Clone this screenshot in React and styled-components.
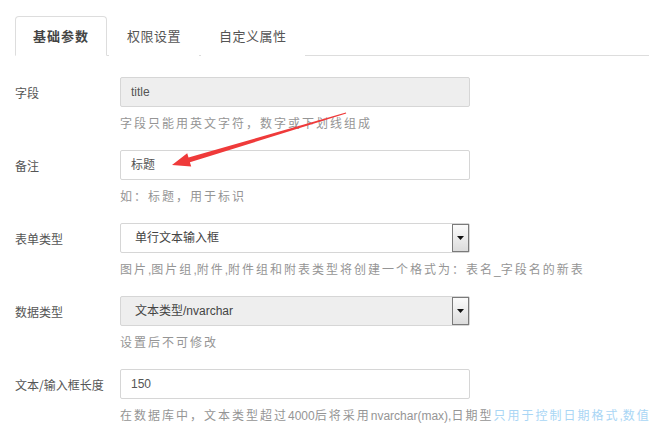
import React from "react";
import styled, { createGlobalStyle } from "styled-components";

const Global = createGlobalStyle`
  html, body { margin: 0; padding: 0; background: #fff; overflow: hidden; }
  body { font-family: "Liberation Sans", "Noto Sans CJK SC", sans-serif; }
`;

const Page = styled.div`
  position: relative;
  width: 649px;
  height: 438px;
  padding: 16px 0 0 15px;
  box-sizing: border-box;
  overflow: hidden;
`;

const TabBar = styled.ul`
  display: flex;
  margin: 0;
  padding: 0;
  list-style: none;
  border-bottom: 1px solid #ddd;
  height: 39px;
`;

const Tab = styled.li`
  padding: 0 17px;
  margin-right: 2px;
  height: 40px;
  line-height: 37px;
  box-sizing: border-box;
  font-family: "Noto Sans CJK SC", sans-serif;
  font-size: 13px;
  color: ${(p) => (p.$active ? "#444" : "#555")};
  font-weight: ${(p) => (p.$active ? 700 : 400)};
  letter-spacing: ${(p) => (p.$active ? "1px" : "0.5px")};
  border: 1px solid ${(p) => (p.$active ? "#ddd" : "transparent")};
  border-bottom-color: ${(p) => (p.$active ? "#fff" : "transparent")};
  border-radius: 4px 4px 0 0;
  background: #fff;
`;

const Form = styled.div`
  display: flex;
  flex-direction: column;
  gap: 17px;
  padding-top: 21px;
`;

const Row = styled.div`
  display: grid;
  grid-template-columns: 105px 350px;
  align-items: start;
`;

const Label = styled.div`
  height: 30px;
  line-height: 32px;
  font-family: "Noto Sans CJK SC", sans-serif;
  font-size: 12px;
  color: #555;
  white-space: nowrap;
`;

const Control = styled.div`
  display: flex;
  flex-direction: column;
`;

const Input = styled.div`
  height: 30px;
  box-sizing: border-box;
  border: 1px solid #d6d6d6;
  border-radius: 2px;
  background: ${(p) => (p.$disabled ? "#eee" : "#fff")};
  padding: 0 10px;
  line-height: 28px;
  font-family: "Liberation Sans", "Noto Sans CJK SC", sans-serif;
  font-size: 12px;
  color: #555;
`;

const Select = styled.div`
  height: 30px;
  box-sizing: border-box;
  border: 1px solid #d6d6d6;
  border-radius: 2px;
  background: ${(p) => (p.$disabled ? "#eee" : "#fff")};
  display: flex;
  align-items: stretch;
  font-family: "Liberation Sans", "Noto Sans CJK SC", sans-serif;
  font-size: 12px;
  color: #444;
`;

const SelectValue = styled.div`
  flex: 1;
  padding-left: 14px;
  line-height: 28px;
`;

const SelectButton = styled.div`
  width: 17px;
  box-sizing: border-box;
  border: 1px solid #7a7a7a;
  background: linear-gradient(#fbfbfb, #dcdcdc);
  display: flex;
  align-items: center;
  justify-content: center;
`;

const Help = styled.div`
  margin-top: 6px;
  height: 20px;
  line-height: 20px;
  font-family: "Noto Sans CJK SC", sans-serif;
  font-size: 12px;
  letter-spacing: 2px;
  color: #959595;
  white-space: nowrap;
`;

const Latin = styled.span`
  font-family: "Liberation Sans", sans-serif;
  letter-spacing: 0;
`;

const Selected = styled.span`
  color: #a9d6f5;
`;

const Arrow = styled.svg`
  position: absolute;
  left: 0;
  top: 0;
  pointer-events: none;
`;

const Caret = () => (
  <svg width="7" height="4" viewBox="0 0 7 4">
    <path d="M0 0H7L3.5 4Z" fill="#111" />
  </svg>
);

export default function App() {
  return (
    <Page>
      <Global />
      <TabBar>
        <Tab $active>基础参数</Tab>
        <Tab>权限设置</Tab>
        <Tab>自定义属性</Tab>
      </TabBar>
      <Form>
        <Row>
          <Label>字段</Label>
          <Control>
            <Input $disabled>title</Input>
            <Help>字段只能用英文字符，数字或下划线组成</Help>
          </Control>
        </Row>
        <Row>
          <Label>备注</Label>
          <Control>
            <Input>标题</Input>
            <Help>如：标题，用于标识</Help>
          </Control>
        </Row>
        <Row>
          <Label>表单类型</Label>
          <Control>
            <Select>
              <SelectValue>单行文本输入框</SelectValue>
              <SelectButton>
                <Caret />
              </SelectButton>
            </Select>
            <Help>
              图片<Latin>,</Latin>图片组<Latin>,</Latin>附件<Latin>,</Latin>附件组和附表类型将创建一个格式为：表名<Latin>_</Latin>字段名的新表
            </Help>
          </Control>
        </Row>
        <Row>
          <Label>数据类型</Label>
          <Control>
            <Select $disabled>
              <SelectValue>文本类型/nvarchar</SelectValue>
              <SelectButton>
                <Caret />
              </SelectButton>
            </Select>
            <Help>设置后不可修改</Help>
          </Control>
        </Row>
        <Row>
          <Label>文本/输入框长度</Label>
          <Control>
            <Input>150</Input>
            <Help>
              在数据库中，文本类型超过<Latin>4000</Latin>后将采用<Latin>nvarchar(max),</Latin>日期型
              <Selected>只用于控制日期格式<Latin>,</Latin>数值</Selected>
            </Help>
          </Control>
        </Row>
      </Form>
      <Arrow width="649" height="438" viewBox="0 0 649 438">
        <polygon
          points="172,165 187.2,153.2 188.5,157.5 345.9,112.6 346.2,113.6 189.9,162.3 191.2,166.6"
          fill="#ef3a3a"
        />
      </Arrow>
    </Page>
  );
}
